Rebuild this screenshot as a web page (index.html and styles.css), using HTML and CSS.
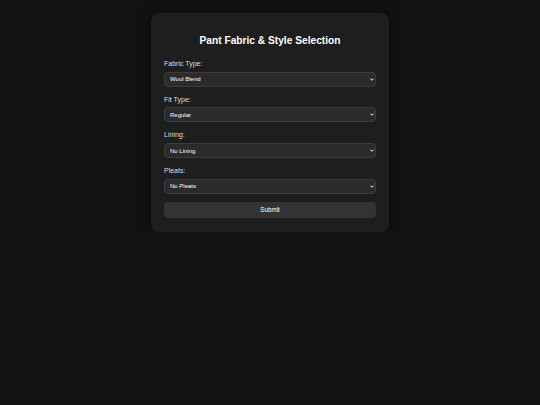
FILE: index.html
```html
<!DOCTYPE html>
<html>
<head>
<meta charset="utf-8">
<link rel="stylesheet" href="styles.css">
</head>
<body>
<div class="card">
  <h1 class="title">Pant Fabric &amp; Style Selection</h1>
  <form class="form">
    <div class="group">
      <label class="label" for="fabric">Fabric Type:</label>
      <div class="select-wrap">
        <select class="select" id="fabric"><option>Wool Blend</option></select>
        <svg class="chev" viewBox="0 0 4 3" width="4" height="3"><path d="M0.4 0.6 L2 2.3 L3.6 0.6" fill="none" stroke="#f0f0f0" stroke-width="1"/></svg>
      </div>
    </div>
    <div class="group">
      <label class="label" for="fit">Fit Type:</label>
      <div class="select-wrap">
        <select class="select" id="fit"><option>Regular</option></select>
        <svg class="chev" viewBox="0 0 4 3" width="4" height="3"><path d="M0.4 0.6 L2 2.3 L3.6 0.6" fill="none" stroke="#f0f0f0" stroke-width="1"/></svg>
      </div>
    </div>
    <div class="group">
      <label class="label" for="lining">Lining:</label>
      <div class="select-wrap">
        <select class="select" id="lining"><option>No Lining</option></select>
        <svg class="chev" viewBox="0 0 4 3" width="4" height="3"><path d="M0.4 0.6 L2 2.3 L3.6 0.6" fill="none" stroke="#f0f0f0" stroke-width="1"/></svg>
      </div>
    </div>
    <div class="group">
      <label class="label" for="pleats">Pleats:</label>
      <div class="select-wrap">
        <select class="select" id="pleats"><option>No Pleats</option></select>
        <svg class="chev" viewBox="0 0 4 3" width="4" height="3"><path d="M0.4 0.6 L2 2.3 L3.6 0.6" fill="none" stroke="#f0f0f0" stroke-width="1"/></svg>
      </div>
    </div>
    <button class="submit" type="button">Submit</button>
  </form>
</div>
</body>
</html>
```
FILE: styles.css
```css
html, body {
  margin: 0;
  padding: 0;
  background: #121212;
  font-family: "Liberation Sans", Arial, sans-serif;
  color: #e0e0e0;
}
body {
  padding-top: 13px;
}
.card {
  width: 238px;
  box-sizing: border-box;
  margin: 0 auto;
  background: #1e1e1e;
  border-radius: 8px;
  padding: 21px 13px 14px 13px;
  box-shadow: 0 0 10px rgba(0, 0, 0, 0.5);
}
.title {
  margin: 0 0 11px 0;
  font-size: 10.2px;
  line-height: 14px;
  font-weight: bold;
  text-align: center;
  color: #ffffff;
}
.group {
  margin-bottom: 8px;
}
.label {
  display: block;
  font-size: 7px;
  line-height: 10.67px;
  margin-bottom: 2px;
  color: #dddddd;
}
.select-wrap {
  position: relative;
}
.select {
  display: block;
  width: 100%;
  height: 15px;
  box-sizing: border-box;
  font-family: "Liberation Sans", Arial, sans-serif;
  font-size: 6px;
  padding: 0 0 0 5px;
  background-color: #2b2b2b;
  color: #ffffff;
  border: 1px solid #3c3c3c;
  border-radius: 4px;
  appearance: none;
  -webkit-appearance: none;
}
.chev {
  position: absolute;
  right: 2px;
  top: 6px;
  pointer-events: none;
}
.submit {
  display: block;
  width: 100%;
  height: 16px;
  margin-top: 4px;
  box-sizing: border-box;
  font-family: "Liberation Sans", Arial, sans-serif;
  font-size: 6.3px;
  background: #333333;
  color: #ffffff;
  border: none;
  border-radius: 4px;
}
```
